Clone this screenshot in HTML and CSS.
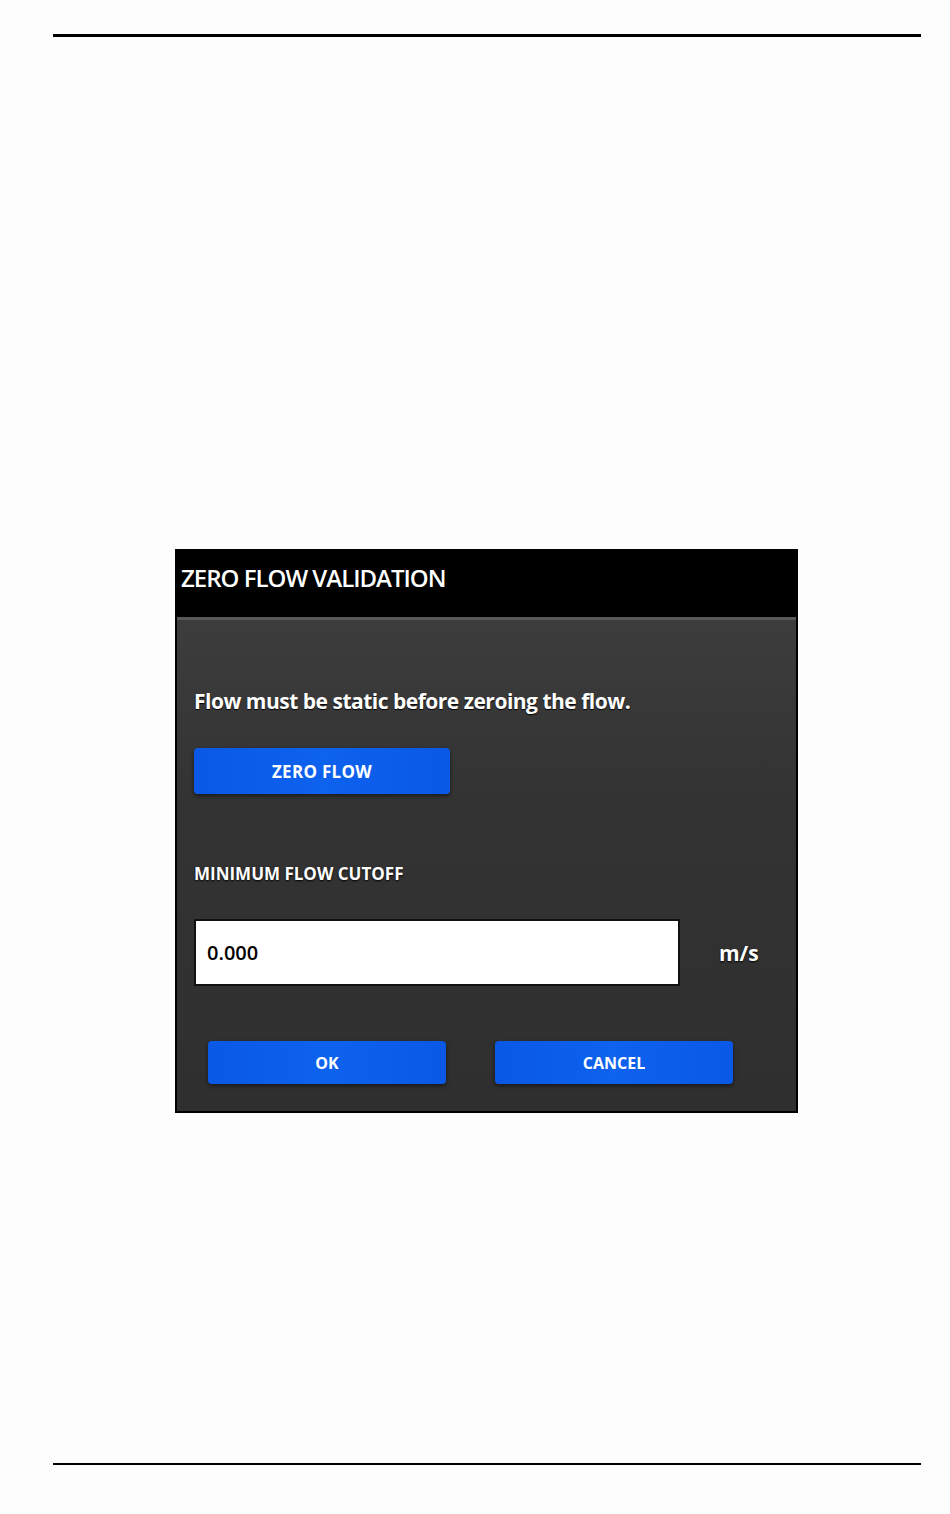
FILE: index.html
```html
<!DOCTYPE html>
<html lang="en">

<head>
    <meta charset="UTF-8">
    <meta name="viewport" content="width=device-width, initial-scale=1.0">
    <title>Zero Flow Validation</title>
    <link rel="stylesheet" href="styles.css">
</head>

<body>
    <div class="page">
        <div class="rule rule-top"></div>

        <div class="dialog">
            <div class="dialog-header">
                <h1>ZERO FLOW VALIDATION</h1>
            </div>

            <div class="dialog-body">
                <p class="message">Flow must be static before zeroing the flow.</p>

                <button class="btn btn-zero">ZERO FLOW</button>

                <div class="field-label">MINIMUM FLOW CUTOFF</div>

                <div class="field-row">
                    <div class="field-input">0.000</div>
                    <span class="unit">m/s</span>
                </div>

                <div class="actions">
                    <button class="btn btn-action">OK</button>
                    <button class="btn btn-action">CANCEL</button>
                </div>
            </div>
        </div>

        <div class="rule rule-bottom"></div>
    </div>
</body>

</html>
```

FILE: styles.css
```css
* {
    margin: 0;
    padding: 0;
    box-sizing: border-box;
}

body {
    font-family: 'Open Sans', 'Liberation Sans', Arial, sans-serif;
    background: #fdfdfd;
    color: #000;
}

.page {
    width: 950px;
    height: 1514px;
    padding-top: 34px;
}

.rule {
    margin-left: 53px;
    width: 868px;
    background: #000;
}

.rule-top {
    height: 3px;
}

.rule-bottom {
    height: 2px;
    margin-top: 350px;
}

/* Dialog */
.dialog {
    margin: 512px 0 0 175px;
    width: 623px;
    height: 564px;
    border: 2px solid #000;
    background: linear-gradient(180deg, #404040 0%, #333 45%, #2f2f2f 100%);
    display: flex;
    flex-direction: column;
}

.dialog-header {
    height: 69px;
    flex-shrink: 0;
    background: #000;
    border-bottom: 3px solid #585858;
    display: flex;
    align-items: center;
    padding: 0 0 14px 4px;
}

.dialog-header h1 {
    color: #fff;
    font-size: 24px;
    font-weight: 600;
    letter-spacing: -1px;
}

.dialog-body {
    padding: 68px 17px 0 17px;
    flex: 1;
}

.message {
    color: #fff;
    font-size: 21px;
    font-weight: 700;
    letter-spacing: -0.5px;
    line-height: 26px;
    text-shadow: 0 1px 1px #000;
}

.btn {
    border: none;
    border-radius: 4px;
    background: linear-gradient(90deg, #0a58e6 0%, #0d62ee 50%, #0a58e6 100%);
    color: #fff;
    font-family: inherit;
    font-weight: 700;
    box-shadow: 0 2px 4px rgba(0, 0, 0, 0.5);
    cursor: pointer;
}

.btn-zero {
    display: block;
    margin-top: 34px;
    width: 256px;
    height: 46px;
    font-size: 17px;
    letter-spacing: 0.3px;
}

.field-label {
    margin-top: 69px;
    color: #fff;
    font-size: 17px;
    font-weight: 700;
    letter-spacing: 0;
    line-height: 22px;
    text-shadow: 0 1px 2px #000;
}

.field-row {
    margin-top: 34px;
    display: flex;
    align-items: center;
}

.field-input {
    width: 486px;
    height: 67px;
    background: #fff;
    border: 2px solid #111;
    display: flex;
    align-items: center;
    padding-left: 11px;
    font-size: 20px;
    font-weight: 600;
    letter-spacing: 0;
}

.unit {
    margin-left: 39px;
    color: #fff;
    font-size: 21px;
    font-weight: 700;
    text-shadow: 0 1px 2px #000;
}

.actions {
    margin-top: 55px;
    padding-left: 14px;
    display: flex;
    gap: 49px;
}

.btn-action {
    width: 238px;
    height: 43px;
    font-size: 16px;
}
```
